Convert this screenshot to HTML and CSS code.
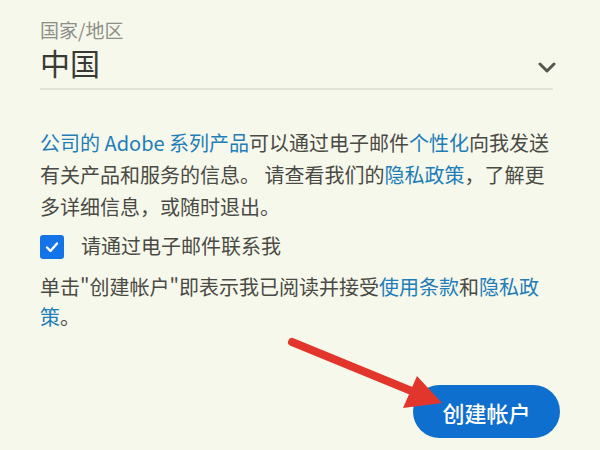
FILE: index.html
```html
<!DOCTYPE html>
<html lang="zh-CN">
<head>
    <meta charset="UTF-8">
    <meta name="viewport" content="width=device-width, initial-scale=1.0">
    <title>创建帐户</title>
    <link rel="stylesheet" href="styles.css">
</head>
<body>
    <div class="signup">
        <!-- Country -->
        <div class="field-label">国家/地区</div>
        <div class="select-row">
            <span class="select-value">中国</span>
            <svg class="chevron" width="18" height="11" viewBox="0 0 18 11">
                <path d="M2 2 L9 9 L16 2" fill="none" stroke="#56564f" stroke-width="3" stroke-linecap="round" stroke-linejoin="round"/>
            </svg>
        </div>

        <!-- Marketing notice -->
        <p class="notice">
            <a class="link" href="#">公司的 Adobe 系列产品</a>可以通过电子邮件<a class="link" href="#">个性化</a>向我发送有关产品和服务的信息。 请查看我们的<a class="link" href="#">隐私政策</a>，了解更多详细信息，或随时退出。
        </p>

        <label class="check-row">
            <span class="checkbox">
                <svg width="14" height="12" viewBox="0 0 14 12">
                    <path d="M2 6.5 L5.5 10 L12 2.5" fill="none" stroke="#fff" stroke-width="2.4" stroke-linecap="round" stroke-linejoin="round"/>
                </svg>
            </span>
            <span>请通过电子邮件联系我</span>
        </label>

        <p class="terms">
            单击"创建帐户"即表示我已阅读并接受<a class="link" href="#">使用条款</a>和<a class="link" href="#">隐私政策</a>。
        </p>

        <div class="actions">
            <button class="btn-primary">创建帐户</button>
        </div>
    </div>

    <!-- annotation arrow -->
    <svg class="annotation" width="600" height="450" viewBox="0 0 600 450">
        <line x1="292" y1="342" x2="414" y2="392" stroke="#e2362c" stroke-width="8" stroke-linecap="round"/>
        <polygon points="417,376 403,408 442,403" fill="#e2362c"/>
    </svg>
</body>
</html>
```

FILE: styles.css
```css
html, body {
    margin: 0;
    height: 100%;
}
body {
    font-family: "Noto Sans CJK SC", "Noto Sans", sans-serif;
    background-color: #f6f8ec;
    color: #4a4a44;
    overflow: hidden;
    position: relative;
}
.signup {
    width: 513px;
    padding: 18px 0 0 40px;
}
.field-label {
    font-size: 19px;
    line-height: 24px;
    color: #8e8f87;
}
.select-row {
    display: flex;
    justify-content: space-between;
    align-items: flex-start;
    height: 46px;
    border-bottom: 2px solid #e2e4d9;
}
.select-value {
    font-size: 30px;
    line-height: 40px;
    color: #3a3a35;
}
.chevron {
    margin-top: 20px;
    margin-right: -3px;
}
.notice {
    margin: 37px 0 0;
    font-size: 20px;
    line-height: 32px;
}
.link {
    color: #1f7db8;
    text-decoration: none;
}
.check-row {
    display: flex;
    align-items: center;
    gap: 17px;
    margin-top: 8px;
    font-size: 20px;
    line-height: 30px;
}
.checkbox {
    width: 24px;
    height: 24px;
    border-radius: 3px;
    background-color: #1473e6;
    display: flex;
    align-items: center;
    justify-content: center;
    margin-top: 2px;
}
.terms {
    margin: 11px 0 0;
    font-size: 20px;
    line-height: 30px;
}
.actions {
    display: flex;
    justify-content: flex-end;
    margin-top: 53px;
    margin-right: -7px;
}
.btn-primary {
    width: 147px;
    height: 53px;
    border: none;
    border-radius: 27px;
    background-color: #0f6fce;
    color: #fff;
    font-family: inherit;
    font-size: 22px;
    font-weight: 500;
    padding: 0;
}
.annotation {
    position: absolute;
    left: 0;
    top: 0;
    pointer-events: none;
}
```
